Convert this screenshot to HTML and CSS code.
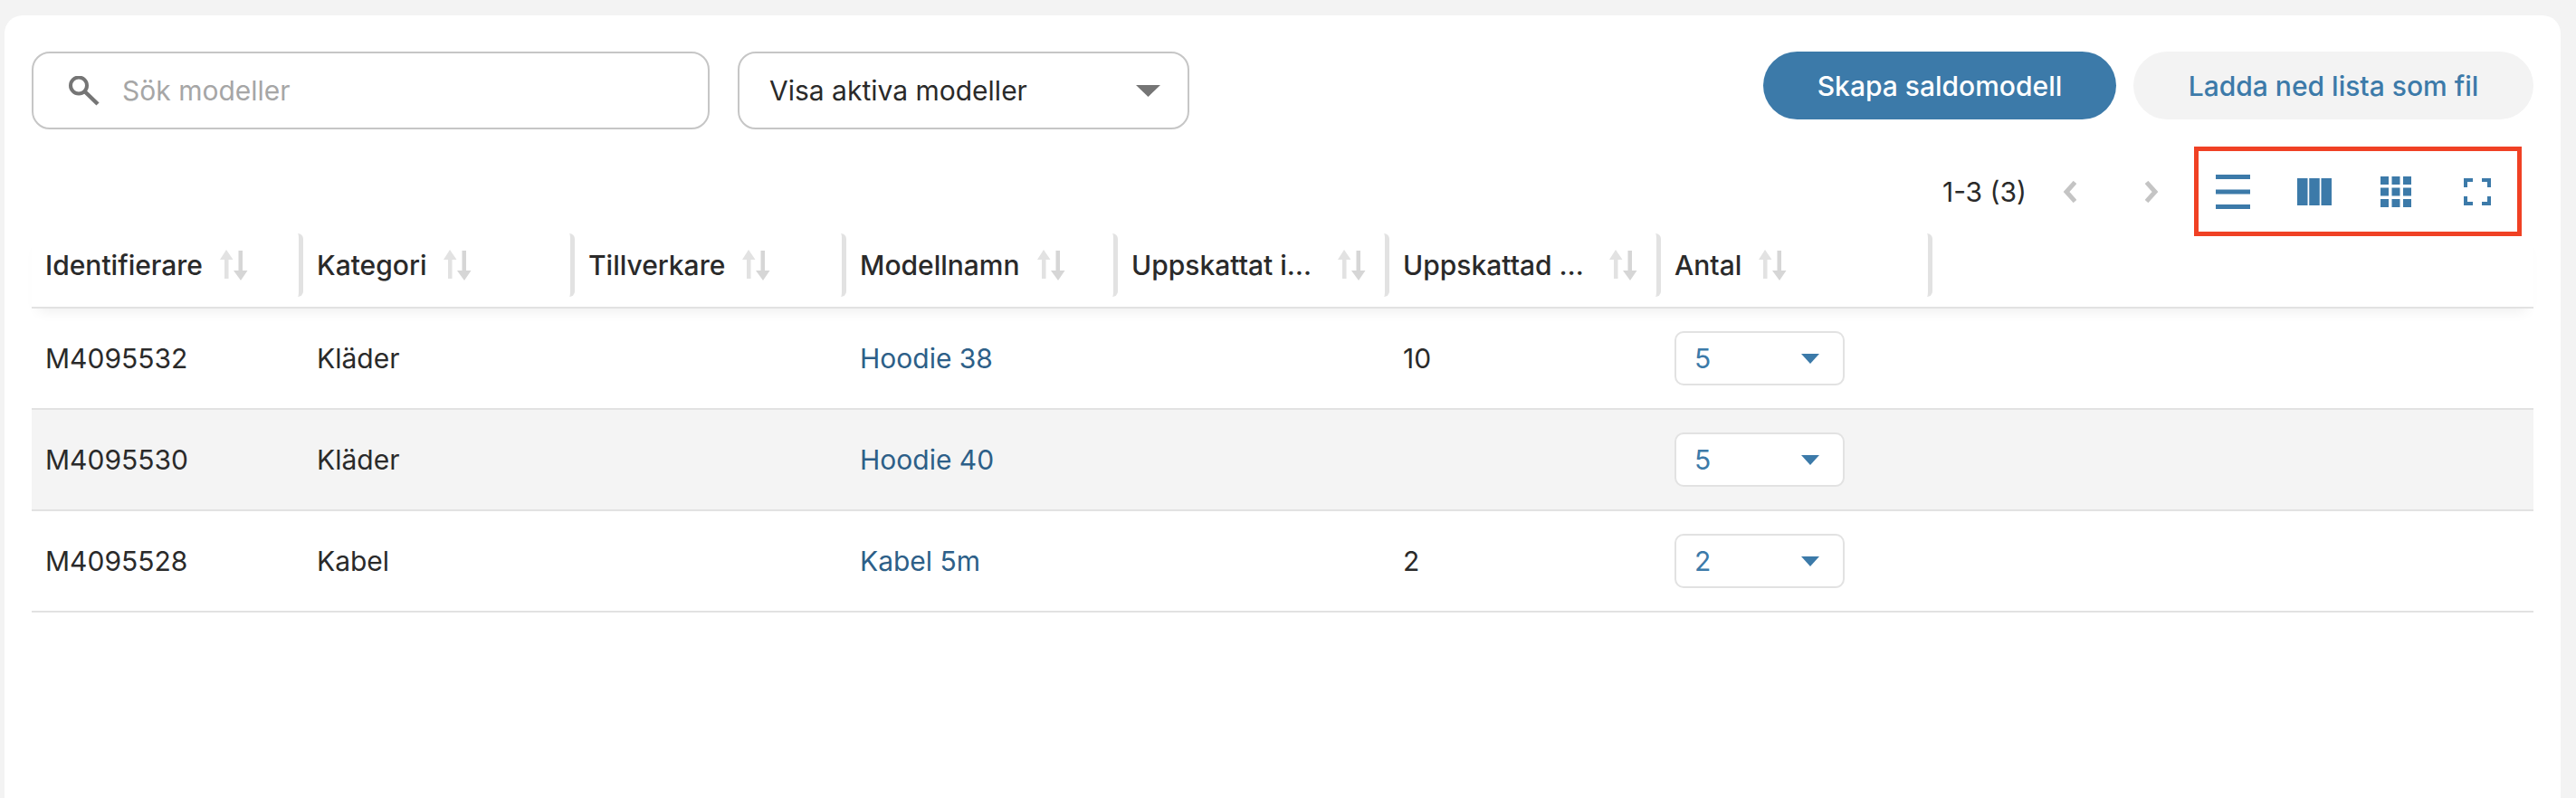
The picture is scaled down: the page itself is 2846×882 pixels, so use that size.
FILE: index.html
```html
<!DOCTYPE html>
<html lang="en">
<head>
    <meta charset="UTF-8">
    <title>Saldomodeller</title>
    <link rel="stylesheet" href="styles.css">
</head>
<body>

<svg width="0" height="0" class="defs">
    <symbol id="sort" viewBox="0 0 32 34">
        <path d="M7 0 L14.5 11 L9.5 11 L9.5 32 L5 32 L5 11 L0 11 Z" fill="#e2e2e2"/>
        <path d="M20.5 1 L25 1 L25 23 L30.5 23 L23 34 L15 23 L20.5 23 Z" fill="#d6d6d6"/>
    </symbol>
    <symbol id="caret" viewBox="0 0 20 11">
        <path d="M0 0 H20 L10 11 Z"/>
    </symbol>
</svg>

<div class="card">
    <div class="top-row">
        <div class="search">
            <svg class="search-icon" viewBox="0 0 35 33">
                <circle cx="12" cy="10.5" r="9" fill="none" stroke="#757575" stroke-width="4"/>
                <path d="M18.5 17 L33 31" stroke="#757575" stroke-width="4.5" fill="none"/>
            </svg>
            <input type="text" placeholder="Sök modeller">
        </div>
        <div class="filter">
            <span>Visa aktiva modeller</span>
            <svg class="filter-caret" viewBox="0 0 27 13"><path d="M0 0 H27 L13.5 13 Z"/></svg>
        </div>
        <button class="btn btn-primary">Skapa saldomodell</button>
        <button class="btn btn-light">Ladda ned lista som fil</button>
    </div>

    <div class="toolbar">
        <span class="page-count">1-3 (3)</span>
        <svg class="chevron chevron-prev" viewBox="0 0 15 24"><path d="M13.5 1.5 L4 12 L13.5 22.5"/></svg>
        <svg class="chevron chevron-next" viewBox="0 0 15 24"><path d="M1.5 1.5 L11 12 L1.5 22.5"/></svg>
        <div class="view-icons">
            <svg class="icon-list" viewBox="0 0 38 38">
                <rect y="0" width="38" height="5"/>
                <rect y="16.5" width="38" height="5"/>
                <rect y="33" width="38" height="5"/>
            </svg>
            <svg class="icon-columns" viewBox="0 0 38 30">
                <rect width="11.5" height="30"/>
                <rect x="13.25" width="11.5" height="30"/>
                <rect x="26.5" width="11.5" height="30"/>
            </svg>
            <svg class="icon-grid" viewBox="0 0 34 34">
                <rect width="9" height="9"/><rect x="12.5" width="9" height="9"/><rect x="25" width="9" height="9"/>
                <rect y="12.5" width="9" height="9"/><rect x="12.5" y="12.5" width="9" height="9"/><rect x="25" y="12.5" width="9" height="9"/>
                <rect y="25" width="9" height="9"/><rect x="12.5" y="25" width="9" height="9"/><rect x="25" y="25" width="9" height="9"/>
            </svg>
            <svg class="icon-full" viewBox="0 0 30 30">
                <path d="M2 10 V2 H10 M20 2 H28 V10 M28 20 V28 H20 M10 28 H2 V20" fill="none" stroke="#3c7aa9" stroke-width="4"/>
            </svg>
        </div>
    </div>

    <div class="table">
        <div class="row head">
            <div class="th"><span class="th-label">Identifierare</span><svg class="sort"><use href="#sort"/></svg></div>
            <div class="th"><span class="th-label">Kategori</span><svg class="sort"><use href="#sort"/></svg></div>
            <div class="th"><span class="th-label">Tillverkare</span><svg class="sort"><use href="#sort"/></svg></div>
            <div class="th"><span class="th-label">Modellnamn</span><svg class="sort"><use href="#sort"/></svg></div>
            <div class="th"><span class="th-label">Uppskattat inköpspris</span><svg class="sort"><use href="#sort"/></svg></div>
            <div class="th"><span class="th-label">Uppskattad månadsförbrukning</span><svg class="sort"><use href="#sort"/></svg></div>
            <div class="th"><span class="th-label">Antal</span><svg class="sort"><use href="#sort"/></svg></div>
        </div>

        <div class="row">
            <div class="td">M4095532</div>
            <div class="td">Kläder</div>
            <div class="td"></div>
            <div class="td"><a href="#">Hoodie 38</a></div>
            <div class="td"></div>
            <div class="td">10</div>
            <div class="td"><div class="qty"><span>5</span><svg class="qty-caret"><use href="#caret"/></svg></div></div>
        </div>
        <div class="row striped">
            <div class="td">M4095530</div>
            <div class="td">Kläder</div>
            <div class="td"></div>
            <div class="td"><a href="#">Hoodie 40</a></div>
            <div class="td"></div>
            <div class="td"></div>
            <div class="td"><div class="qty"><span>5</span><svg class="qty-caret"><use href="#caret"/></svg></div></div>
        </div>
        <div class="row">
            <div class="td">M4095528</div>
            <div class="td">Kabel</div>
            <div class="td"></div>
            <div class="td"><a href="#">Kabel 5m</a></div>
            <div class="td"></div>
            <div class="td">2</div>
            <div class="td"><div class="qty"><span>2</span><svg class="qty-caret"><use href="#caret"/></svg></div></div>
        </div>
    </div>
</div>

</body>
</html>
```

FILE: styles.css
```css
html, body {
    height: 100%;
}

body {
    margin: 0;
    padding: 17px 17px 0 5px;
    box-sizing: border-box;
    background-color: #f3f3f3;
    font-family: Inter, "Liberation Sans", sans-serif;
    font-size: 30px;
    color: #2a2a2a;
    overflow: hidden;
}

.defs {
    position: absolute;
}

.card {
    height: 100%;
    box-sizing: border-box;
    padding: 40px 30px 0;
    background-color: #fff;
    border-radius: 20px 20px 0 0;
}

.top-row {
    display: flex;
    align-items: flex-start;
}

.search {
    display: flex;
    align-items: center;
    width: 749px;
    height: 86px;
    box-sizing: border-box;
    padding-left: 38px;
    border: 2px solid #c6c6c6;
    border-radius: 20px;
}

.search-icon {
    width: 35px;
    height: 33px;
    flex: none;
}

.search input {
    flex: 1;
    min-width: 0;
    margin-left: 25px;
    padding: 0;
    border: none;
    outline: none;
    background: none;
    font-family: inherit;
    font-size: 30px;
}

.search input::placeholder {
    color: #a6a6a6;
    opacity: 1;
}

.filter {
    display: flex;
    align-items: center;
    justify-content: space-between;
    width: 499px;
    height: 86px;
    box-sizing: border-box;
    margin-left: 31px;
    padding: 0 30px 0 33px;
    border: 2px solid #c6c6c6;
    border-radius: 20px;
}

.filter-caret {
    width: 27px;
    height: 13px;
    fill: #757575;
}

.btn {
    height: 75px;
    border: none;
    border-radius: 38px;
    font-family: inherit;
    font-size: 30px;
    font-weight: 450;
}

.btn-primary {
    width: 390px;
    margin-left: auto;
    background-color: #3c7aa9;
    color: #fff;
}

.btn-light {
    width: 442px;
    margin-left: 19px;
    background-color: #f3f3f3;
    color: #3c7aa9;
}

.toolbar {
    display: flex;
    align-items: center;
    justify-content: flex-end;
    margin: 19px 13px -3px 0;
}

.page-count {
    margin-right: 40px;
}

.chevron {
    width: 15px;
    height: 24px;
    fill: none;
    stroke: #c4c4c4;
    stroke-width: 5;
}

.chevron-next {
    margin-left: 76px;
    margin-right: 39px;
}

.view-icons {
    display: flex;
    align-items: center;
    width: 362px;
    height: 99px;
    box-sizing: border-box;
    border: 5px solid #f04124;
    padding-left: 19px;
    fill: #3c7aa9;
}

.icon-list {
    width: 38px;
    height: 38px;
}

.icon-columns {
    width: 38px;
    height: 30px;
    margin-left: 52px;
}

.icon-grid {
    width: 34px;
    height: 34px;
    margin-left: 54px;
}

.icon-full {
    width: 30px;
    height: 30px;
    margin-left: 58px;
}

.row {
    display: grid;
    grid-template-columns: repeat(7, 300px) 1fr;
    height: 112px;
    box-sizing: border-box;
    align-items: center;
    border-bottom: 2px solid #e2e2e2;
}

.row.head {
    position: relative;
    height: 83px;
    padding-bottom: 11px;
    box-shadow: 0 10px 14px -8px rgba(0, 0, 0, 0.08);
}

.row.striped {
    background-color: #f4f4f4;
}

.th {
    display: flex;
    align-items: center;
    height: 70px;
    box-sizing: border-box;
    padding-left: 15px;
    border-right: 5px solid #e2e2e2;
    border-radius: 0 6px 6px 0;
    font-weight: 450;
}

.th-label {
    max-width: 209px;
    white-space: nowrap;
    overflow: hidden;
    text-overflow: ellipsis;
}

.sort {
    width: 32px;
    height: 34px;
    flex: none;
    margin-left: 19px;
}

.td {
    padding-left: 15px;
}

.td a {
    color: #2d5f88;
    text-decoration: none;
}

.qty {
    display: flex;
    align-items: center;
    justify-content: space-between;
    width: 188px;
    height: 60px;
    box-sizing: border-box;
    padding: 0 26px 0 20px;
    background-color: #fff;
    border: 2px solid #e2e2e2;
    border-radius: 10px;
    color: #3c7aa9;
}

.qty-caret {
    width: 20px;
    height: 11px;
    fill: #3c7aa9;
}
```
